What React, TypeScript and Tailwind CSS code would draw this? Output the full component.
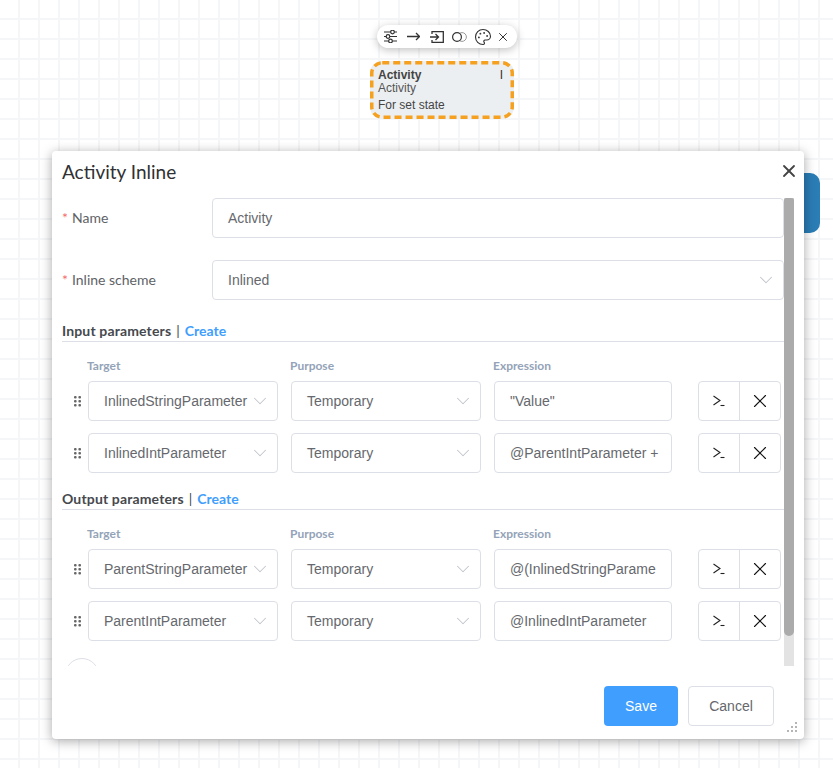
import React from "react";
import { ChevronDown, X, Palette } from "lucide-react";

const sans = "font-['Liberation_Sans',Arial,sans-serif]";
const lato = "font-['Lato',sans-serif]";

function Grip() {
  return (
    <svg width="7" height="11" viewBox="0 0 7 11" className="shrink-0 text-[#666]" fill="currentColor">
      <rect x="0" y="0" width="2.6" height="2.6" rx="1" />
      <rect x="4.4" y="0" width="2.6" height="2.6" rx="1" />
      <rect x="0" y="4" width="2.6" height="2.6" rx="1" />
      <rect x="4.4" y="4" width="2.6" height="2.6" rx="1" />
      <rect x="0" y="8" width="2.6" height="2.6" rx="1" />
      <rect x="4.4" y="8" width="2.6" height="2.6" rx="1" />
    </svg>
  );
}

function Select({ value, className }: { value: string; className: string }) {
  return (
    <div className={`flex h-10 shrink-0 items-center justify-between rounded border border-[#dcdfe6] bg-white pl-[15px] pr-[6px] text-sm text-[#66686d] ${sans} ${className}`}>
      <span className="whitespace-nowrap">{value}</span>
      <ChevronDown size={22} strokeWidth={1.1} className="shrink-0 text-[#c0c4cc]" />
    </div>
  );
}

function Row({ target, expr }: { target: string; expr: string }) {
  return (
    <div className="flex h-10 items-center">
      <div className="ml-[12px] mr-[2px] w-[12px]">
        <Grip />
      </div>
      <Select value={target} className="w-[190px]" />
      <Select value="Temporary" className="ml-[13px] w-[190px]" />
      <div className={`ml-[13px] flex h-10 w-[178px] shrink-0 items-center rounded border border-[#dcdfe6] pl-[15px] text-sm text-[#66686d] ${sans}`}>
        <span className="whitespace-nowrap">{expr}</span>
      </div>
      <div className="ml-[26px] flex h-10 w-[83px] shrink-0 rounded border border-[#dcdfe6]">
        <div className="flex w-[41px] items-center justify-center border-r border-[#dcdfe6]">
          <svg width="14" height="14" viewBox="0 0 14 14" fill="none" stroke="#222" strokeWidth="1.1">
            <path d="M1.5 2 L8 6.5 L1.5 11" />
            <path d="M8.5 11.5 H12.5" />
          </svg>
        </div>
        <div className="flex flex-1 items-center justify-center">
          <X size={22} strokeWidth={1.2} className="text-[#111]" />
        </div>
      </div>
    </div>
  );
}

function Heading({ title }: { title: string }) {
  return (
    <div className={`flex h-[22px] items-center border-b border-[#dcdfe6] pt-[1px] text-sm font-bold text-[#46494e] ${lato}`}>
      <span className="tracking-[0.15px]">{title}</span>
      <span className="mx-[5px] font-normal">|</span>
      <span className="text-[#409eff]">Create</span>
    </div>
  );
}

function Columns() {
  return (
    <div className={`flex h-[15px] items-center text-xs font-bold text-[#94a3b8] ${lato}`}>
      <span className="ml-[25px] w-[203px]">Target</span>
      <span className="w-[203px]">Purpose</span>
      <span>Expression</span>
    </div>
  );
}

function Toolbar() {
  return (
    <div className="absolute left-[377px] top-[25px] flex h-[23px] w-[140px] items-center rounded-full bg-white pl-[7px] shadow-[0_2px_8px_rgba(0,0,0,0.25)]">
      <svg width="13" height="13" viewBox="0 0 13 13" fill="none" stroke="#333" strokeWidth="1.2">
        <path d="M0 2H13M0 6.5H13M0 11H13" />
        <circle cx="8.5" cy="2" r="1.8" fill="white" />
        <circle cx="4" cy="6.5" r="1.8" fill="white" />
        <circle cx="6.5" cy="11" r="1.8" fill="white" />
      </svg>
      <svg width="13" height="11" viewBox="0 0 13 11" fill="none" stroke="#333" strokeWidth="1.3" className="ml-[10px]">
        <path d="M0 5.5H12.5M9 2L12.5 5.5L9 9" />
      </svg>
      <svg width="14" height="12" viewBox="0 0 14 12" fill="none" stroke="#333" strokeWidth="1.3" className="ml-[10px]">
        <path d="M2 3V0.7H13.3V11.3H2V9" />
        <path d="M0 6H8.5M5.5 3L8.5 6L5.5 9" />
      </svg>
      <svg width="15" height="10" viewBox="0 0 15 10" fill="none" className="ml-[8px]">
        <circle cx="10" cy="5" r="4.4" stroke="#999" strokeWidth="1" />
        <circle cx="5" cy="5" r="4.4" stroke="#333" strokeWidth="1.2" fill="white" />
      </svg>
      <Palette size={18} strokeWidth={1.5} className="ml-[6.5px] mr-[-1.5px] text-[#333]" />
      <X size={14} strokeWidth={1.7} className="ml-[6px] text-[#333]" />
    </div>
  );
}

function Node() {
  return (
    <div className={`absolute left-[370px] top-[61px] h-[58px] w-[144px] rounded-[12px] bg-[#eceff1] pl-[8px] pr-[11px] pt-[7px] text-xs leading-[14px] text-[#555] ${sans}`}>
      <svg width="144" height="58" className="absolute left-0 top-0" fill="none">
        <rect x="1.75" y="1.75" width="140.5" height="54.5" rx="10.5" stroke="#f5a01e" strokeWidth="3.5" strokeDasharray="7 4" />
      </svg>
      <div className="flex justify-between font-bold text-[#444]">
        <span>Activity</span>
        <span className="font-normal text-[#333]">I</span>
      </div>
      <div className="-mt-[1px]">Activity</div>
      <div className="mt-[3px] text-[#444]">For set state</div>
    </div>
  );
}

export default function App() {
  return (
    <div className="relative h-[768px] w-[833px] overflow-hidden bg-white bg-[linear-gradient(to_right,transparent_18px,#f5f6f8_18px,#f5f6f8_20px),linear-gradient(to_bottom,transparent_18px,#f5f6f8_18px,#f5f6f8_20px)] bg-[size:20px_20px]">
      <Toolbar />
      <Node />
      <div className="absolute left-[790px] top-[173px] h-[60px] w-[30px] rounded-[10px] bg-[#2a7db5]" />

      <div className="absolute left-[52px] top-[151px] h-[588px] w-[752px] rounded bg-white shadow-[0_2px_12px_rgba(0,0,0,0.35)]">
        <div className="flex h-[47px] items-start justify-between pl-[10px] pr-[5px] pt-[9px]">
          <span className={`text-[19px] leading-6 text-[#303133] ${lato}`}>Activity Inline</span>
          <X size={20} strokeWidth={2.2} className="mt-[1px] text-[#444]" />
        </div>

        <div className="flex h-[468px] pl-[10px]">
          <div className="w-[722px] overflow-hidden">
            <div className="flex h-10 items-center">
              <span className={`w-[150px] text-sm text-[#606266] ${lato}`}>
                <span className="mr-1 text-[#f56c6c]">*</span>Name
              </span>
              <div className={`flex h-10 flex-1 items-center rounded border border-[#dcdfe6] pl-[15px] text-sm text-[#66686d] ${sans}`}>Activity</div>
            </div>
            <div className="mt-[22px] flex h-10 items-center">
              <span className={`w-[150px] text-sm text-[#606266] ${lato}`}>
                <span className="mr-1 text-[#f56c6c]">*</span>Inline scheme
              </span>
              <Select value="Inlined" className="flex-1" />
            </div>

            <div className="mt-[20px]">
              <Heading title="Input parameters" />
            </div>
            <div className="mt-[16px]">
              <Columns />
            </div>
            <div className="mt-[8px] flex flex-col gap-3">
              <Row target="InlinedStringParameter" expr={'"Value"'} />
              <Row target="InlinedIntParameter" expr="@ParentIntParameter +" />
            </div>

            <div className="mt-[15px]">
              <Heading title="Output parameters" />
            </div>
            <div className="mt-[16px]">
              <Columns />
            </div>
            <div className="mt-[8px] flex flex-col gap-3">
              <Row target="ParentStringParameter" expr="@(InlinedStringParame" />
              <Row target="ParentIntParameter" expr="@InlinedIntParameter" />
            </div>

            <div className="ml-[3px] mt-[17px] h-[34px] w-[34px] rounded-full border border-[#dcdfe6]" />
          </div>
          <div className="h-full w-[10px] bg-[#e3e3e3]">
            <div className="h-[438px] rounded-b-[5px] rounded-t-[2px] bg-[#ababab]" />
          </div>
        </div>

        <div className={`mt-[20px] flex justify-end gap-[10px] pr-[30px] text-sm ${sans}`}>
          <div className="flex h-10 w-[74px] items-center justify-center rounded bg-[#409eff] text-white">Save</div>
          <div className="flex h-10 w-[86px] items-center justify-center rounded border border-[#dcdfe6] text-[#66686d]">Cancel</div>
        </div>

        <svg width="12" height="12" viewBox="0 0 12 12" className="absolute bottom-[6px] right-[6px]" fill="#b5b5b5">
          <rect x="9" y="1" width="2" height="2" />
          <rect x="5" y="5" width="2" height="2" />
          <rect x="9" y="5" width="2" height="2" />
          <rect x="1" y="9" width="2" height="2" />
          <rect x="5" y="9" width="2" height="2" />
          <rect x="9" y="9" width="2" height="2" />
        </svg>
      </div>
    </div>
  );
}
